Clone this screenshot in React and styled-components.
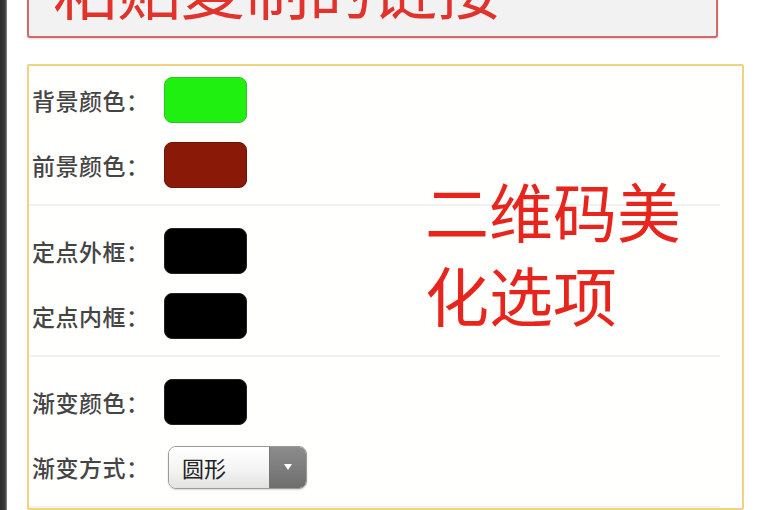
import React from "react";
import styled, { createGlobalStyle } from "styled-components";

const Global = createGlobalStyle`
  html, body { margin: 0; padding: 0; background: #fff; overflow: hidden; }
  body { font-family: "Noto Sans CJK SC", "Noto Sans", sans-serif; }
`;

const Page = styled.div`
  position: relative;
  display: flex;
  width: 768px;
  height: 510px;
  overflow: hidden;
  background: #fff;
`;

const EdgeStrip = styled.div`
  flex: 0 0 7px;
  background: linear-gradient(90deg, #2c2c2c 0%, #3a3a3a 70%, #8a8a8a 100%);
`;

const Content = styled.div`
  flex: 1;
  padding-left: 20px;
  display: flex;
  flex-direction: column;
`;

const TitleBox = styled.div`
  box-sizing: border-box;
  width: 691px;
  margin-top: -54px;
  padding: 6px 0 18px 24px;
  border: 2px solid #cd6a6a;
  border-radius: 3px;
  background: #f2f2f2;
  box-shadow: 0 1px 2px rgba(220, 120, 120, 0.35);
  color: #e2322c;
  font-size: 64px;
  line-height: 64px;
  white-space: nowrap;
`;

const Panel = styled.div`
  margin-top: 26px;
  width: 713px;
  height: 520px;
  border: 2px solid #efd37e;
  border-radius: 2px;
  background: #fffffe;
`;

const Group = styled.div`
  display: flex;
  flex-direction: column;
  gap: 19px;
  margin-right: 22px;
  padding: ${(p) => (p.$first ? "11px" : "22px")} 0 16px 3px;
  border-bottom: 2px solid #f1f1f1;
`;

const Row = styled.div`
  display: flex;
  align-items: center;
  height: 46px;
`;

const Label = styled.div`
  width: 132px;
  color: #454545;
  font-size: 23px;
  font-weight: 500;
  letter-spacing: 0.5px;
`;

const Swatch = styled.div`
  width: 81px;
  height: 44px;
  border-radius: 8px;
  background: ${(p) => p.$color};
  border: 1px solid ${(p) => p.$edge};
`;

const Select = styled.div`
  display: flex;
  margin-left: 4px;
  width: 137px;
  height: 41px;
  border: 1px solid #9a9a9a;
  border-radius: 8px;
  overflow: hidden;
  box-shadow: 0 1px 2px rgba(0, 0, 0, 0.15);
`;

const SelectText = styled.div`
  flex: 1;
  display: flex;
  align-items: center;
  padding-left: 13px;
  background: linear-gradient(180deg, #ffffff 0%, #f4f4f4 55%, #e2e2e2 100%);
  color: #222;
  font-size: 22px;
`;

const SelectArrow = styled.div`
  width: 36px;
  display: flex;
  align-items: center;
  justify-content: center;
  border-left: 1px solid #777;
  background: linear-gradient(180deg, #8c8c8c 0%, #6e6e6e 100%);
`;

const Note = styled.div`
  position: absolute;
  left: 425px;
  top: 167px;
  width: 270px;
  color: #e8251d;
  font-size: 64px;
  line-height: 84px;
`;

export default function App() {
  return (
    <Page>
      <Global />
      <EdgeStrip />
      <Content>
        <TitleBox>粘贴复制的链接</TitleBox>
        <Panel>
          <Group $first>
            <Row>
              <Label>背景颜色：</Label>
              <Swatch $color="#1ff00f" $edge="#2fc41f" />
            </Row>
            <Row>
              <Label>前景颜色：</Label>
              <Swatch $color="#8a1a07" $edge="#6e1406" />
            </Row>
          </Group>
          <Group>
            <Row>
              <Label>定点外框：</Label>
              <Swatch $color="#000" $edge="#222" />
            </Row>
            <Row>
              <Label>定点内框：</Label>
              <Swatch $color="#000" $edge="#222" />
            </Row>
          </Group>
          <Group>
            <Row>
              <Label>渐变颜色：</Label>
              <Swatch $color="#000" $edge="#222" />
            </Row>
            <Row>
              <Label>渐变方式：</Label>
              <Select>
                <SelectText>圆形</SelectText>
                <SelectArrow>
                  <svg width="10" height="8" viewBox="0 0 10 8">
                    <path d="M1 1 L9 1 L5 7 Z" fill="#fff" />
                  </svg>
                </SelectArrow>
              </Select>
            </Row>
          </Group>
        </Panel>
      </Content>
      <Note>二维码美化选项</Note>
    </Page>
  );
}
